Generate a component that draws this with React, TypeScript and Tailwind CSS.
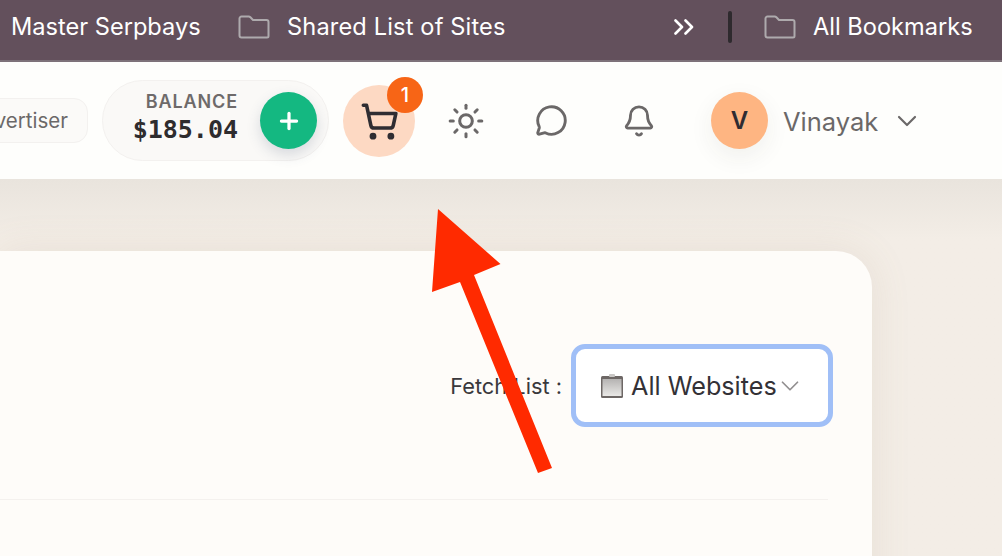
import { Bell, ChevronDown, MessageCircle, Plus, ShoppingCart, Sun } from "lucide-react";

const inter = "font-['Inter','Noto_Sans',sans-serif]";

function FolderIcon() {
  return (
    <svg width="32" height="24" viewBox="0 0 32 24" fill="none" className="shrink-0">
      <path d="M1.5 20.5V3.5a2 2 0 0 1 2-2h7.2c.7 0 1.2.3 1.7.8L15 5h13.5a2 2 0 0 1 2 2v14a1.5 1.5 0 0 1-1.5 1.5H3.5a2 2 0 0 1-2-2Z" stroke="#aeaaad" strokeWidth="2" strokeLinejoin="round" />
    </svg>
  );
}

function DoubleChevron() {
  return (
    <svg width="20" height="16" viewBox="0 0 20 16" fill="none" className="shrink-0">
      <path d="M1.5 1.5 8 8l-6.5 6.5M11.5 1.5 18 8l-6.5 6.5" stroke="#ffffff" strokeWidth="2.6" strokeLinecap="round" strokeLinejoin="round" />
    </svg>
  );
}

function Notepad() {
  return (
    <svg width="24" height="26" viewBox="0 0 24 26" className="shrink-0">
      <defs>
        <linearGradient id="pad" x1="0" y1="0" x2="0" y2="1">
          <stop offset="0" stopColor="#b5b3b2" />
          <stop offset="1" stopColor="#e9e8e6" />
        </linearGradient>
      </defs>
      <rect x="1" y="3" width="22" height="22" rx="1.5" fill="#6d6765" />
      <rect x="2.5" y="6" width="19" height="17" fill="url(#pad)" />
      <rect x="9" y="1" width="6" height="3" rx="1" fill="#c9c7c5" />
    </svg>
  );
}

export default function App() {
  return (
    <div className={`${inter} relative flex h-[556px] w-[1002px] flex-col overflow-hidden bg-[#f3ede6]`}>
      <div className="flex h-[62px] shrink-0 items-center border-b-2 border-[#7d7179] bg-[#63505c] pb-[7px] text-[23.6px] text-white">
        <span className="ml-[11px] w-[189px] whitespace-nowrap">Master Serpbays</span>
        <span className="ml-[38px]"><FolderIcon /></span>
        <span className="ml-[17px] w-[219px] tracking-[0.15px] whitespace-nowrap">Shared List of Sites</span>
        <span className="ml-[168px]"><DoubleChevron /></span>
        <span className="ml-[34px] h-[32px] w-[4px] shrink-0 rounded-full bg-[#2e2a2e]" />
        <span className="ml-[32px]"><FolderIcon /></span>
        <span className="ml-[17px] whitespace-nowrap">All Bookmarks</span>
      </div>

      <header className="relative z-10 flex h-[117px] shrink-0 items-center bg-[#fefefc]">
        <div className="ml-[-60px] flex h-[45px] w-[148px] items-center justify-end rounded-[14px] border border-[#f3f1ef] bg-[#fbfaf8] pt-[1px] pr-[19px] text-[20.5px] text-[#6b6868]">
          <span className="whitespace-nowrap">Advertiser</span>
        </div>
        <div className="ml-[14px] flex h-[81px] w-[227px] shrink-0 items-center rounded-full border border-[#f3f1ef] bg-[#faf9f7]">
          <div className="ml-[29px] flex w-[106px] flex-col items-end pb-[4px]">
            <span className="text-[18px] leading-[22px] font-semibold tracking-[0.9px] text-[#6e6a6a]">BALANCE</span>
            <span className="font-['DejaVu_Sans_Mono','Liberation_Mono',monospace] text-[25px] leading-[34px] font-bold text-[#2e2c2e]">$185.04</span>
          </div>
          <div className="ml-[22px] flex h-[57px] w-[57px] shrink-0 items-center justify-center rounded-full bg-[#14b881] text-white shadow-[0_6px_14px_rgba(60,80,110,0.18)]">
            <Plus size={26} strokeWidth={3} />
          </div>
        </div>
        <div className="relative ml-[14px] flex h-[72px] w-[72px] shrink-0 items-center justify-center rounded-full bg-[#fdd9c3] pt-[2px]">
          <ShoppingCart size={39} strokeWidth={2.2} color="#2f2d32" />
          <span className="absolute top-[-8px] right-[-8px] flex h-[36px] w-[36px] items-center justify-center rounded-full bg-[#f76516] text-[20px] font-medium text-white">1</span>
        </div>
        <Sun className="ml-[32px] shrink-0" size={38} strokeWidth={1.9} color="#6b6868" />
        <MessageCircle className="ml-[50px] shrink-0" size={33} strokeWidth={2.1} color="#6b6868" />
        <Bell className="ml-[54px] shrink-0" size={34} strokeWidth={2} color="#6b6868" />
        <div className="ml-[55px] flex h-[57px] w-[57px] shrink-0 items-center justify-center rounded-full bg-[#feb582] text-[24px] font-semibold text-[#2e2c32] shadow-[0_8px_24px_rgba(60,50,40,0.07)]">V</div>
        <span className="ml-[15px] whitespace-nowrap pt-[3px] text-[25.5px] text-[#6b6868]">Vinayak</span>
        <ChevronDown className="ml-[13px] shrink-0" size={32} strokeWidth={1.6} color="#6b6868" />
      </header>

      <main className="flex-1 bg-gradient-to-b from-[#e9e4dd] to-[#f3ede6] to-[60px] pt-[72px]">
        <div className="h-[400px] w-[872px] rounded-tr-[36px] bg-[#fefcf9] pt-[93px] shadow-[0_0_40px_rgba(160,130,100,0.12)]">
          <div className="flex items-center justify-end pr-[39px]">
            <span className="mr-[9px] pt-[1px] text-[21.8px] whitespace-nowrap text-[#3a383c]">Fetch List :</span>
            <div className="flex h-[83px] w-[262px] items-center rounded-[14px] border-[5px] border-[#a0bff7] bg-white pt-[1px] pl-[24px] text-[25.2px] text-[#333136]">
              <Notepad />
              <span className="ml-[7px] pt-[2px] whitespace-nowrap">All Websites</span>
              <ChevronDown className="ml-[-2px] shrink-0" size={30} strokeWidth={1.4} color="#928f90" />
            </div>
          </div>
          <div className="mt-[72px] mr-[44px] h-px bg-[#f4f1ee]" />
        </div>
      </main>

      <svg className="pointer-events-none absolute top-0 left-0 z-20" width="1002" height="556" viewBox="0 0 1002 556">
        <polygon fill="#ff2a00" points="438,209 500.5,264 474,275 552,468 538,473 460,282 432,292" />
      </svg>
    </div>
  );
}
